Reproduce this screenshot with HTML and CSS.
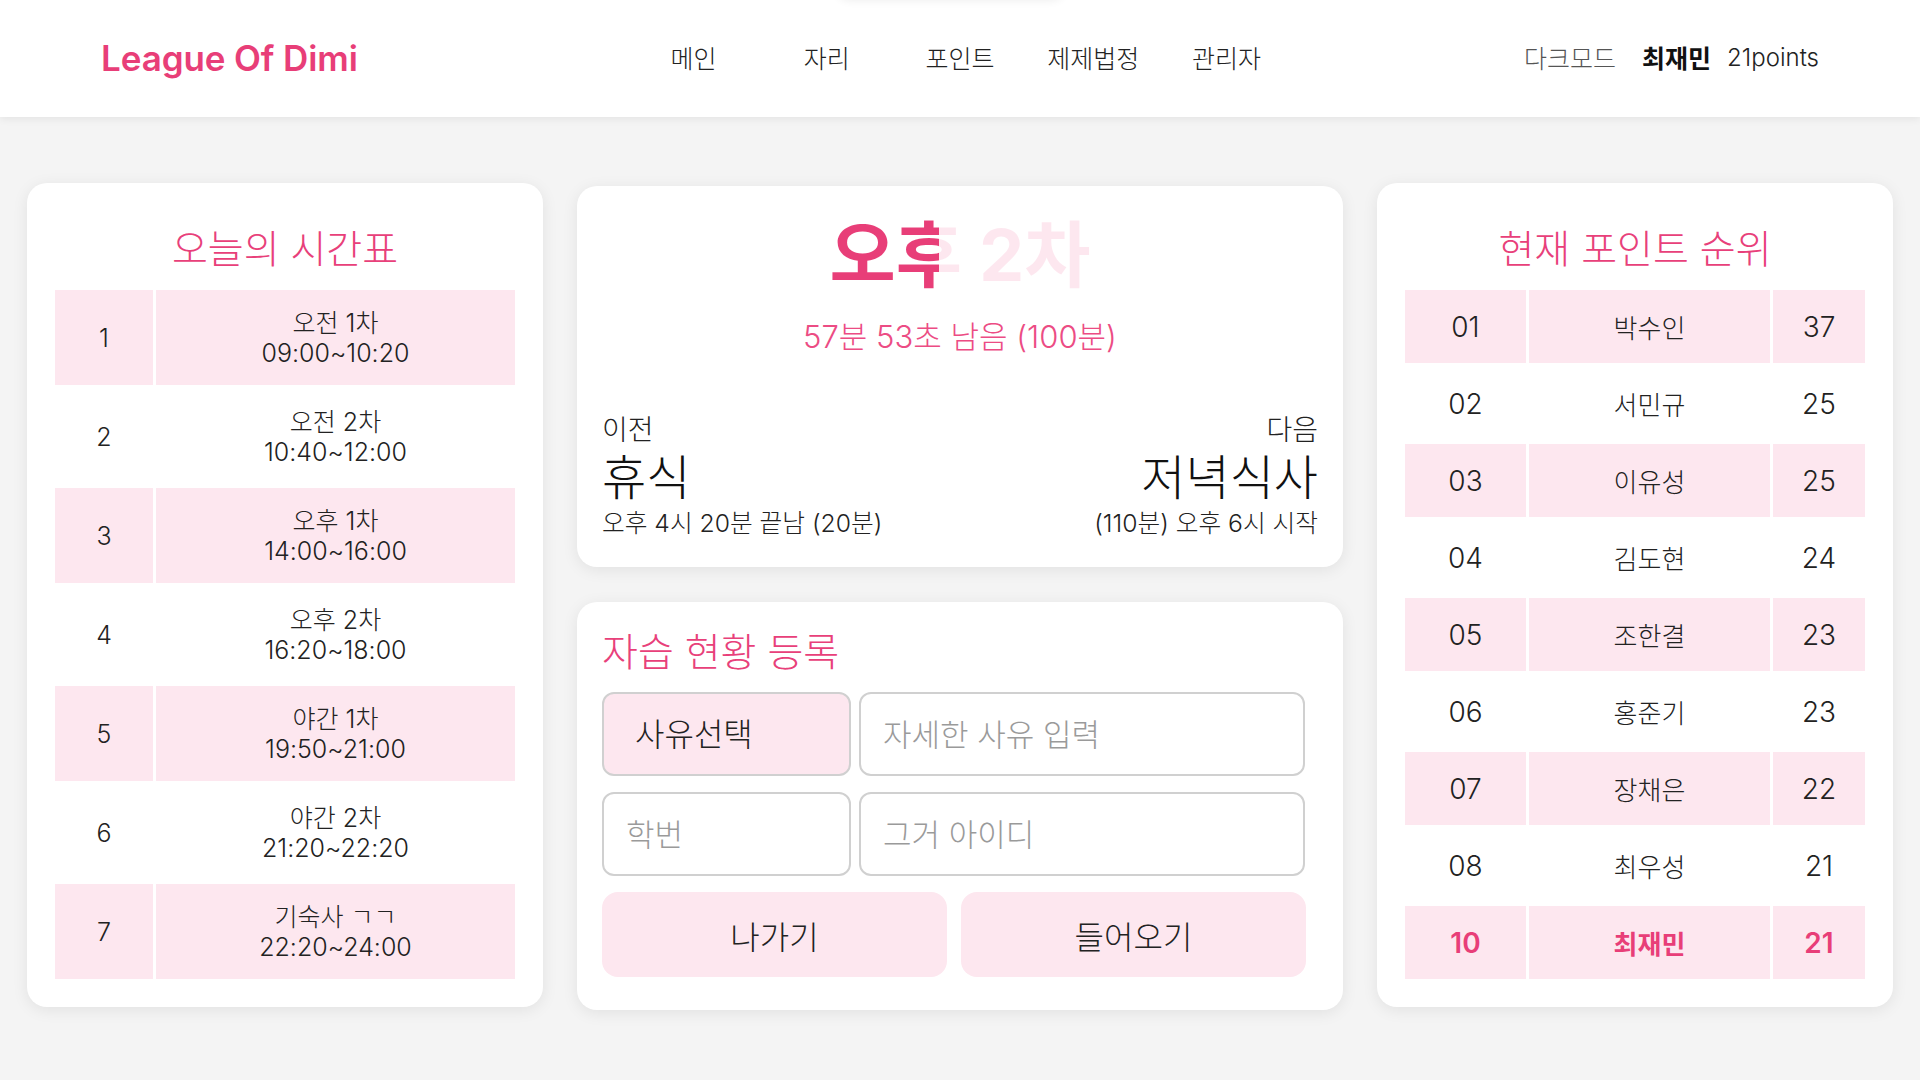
FILE: index.html
```html
<!DOCTYPE html>
<html lang="ko">
<head>
<meta charset="utf-8">
<title>League Of Dimi</title>
<link rel="stylesheet" href="styles.css">
</head>
<body>
<div class="toast-ghost"></div>
<header class="header">
  <div class="logo">League Of Dimi</div>
  <nav class="nav">
    <a class="nav-item">메인</a>
    <a class="nav-item">자리</a>
    <a class="nav-item">포인트</a>
    <a class="nav-item">제제법정</a>
    <a class="nav-item">관리자</a>
  </nav>
  <div class="user">
    <span class="dark">다크모드</span>
    <span class="name">최재민</span>
    <span class="points">21points</span>
  </div>
</header>

<main class="main">
  <section class="card side-card">
    <h2 class="card-title">오늘의 시간표</h2>
    <div class="timetable">
      <div class="tt-row odd"><div class="cell">1</div><div class="cell">오전 1차<br>09:00~10:20</div></div>
      <div class="tt-row"><div class="cell">2</div><div class="cell">오전 2차<br>10:40~12:00</div></div>
      <div class="tt-row odd"><div class="cell">3</div><div class="cell">오후 1차<br>14:00~16:00</div></div>
      <div class="tt-row"><div class="cell">4</div><div class="cell">오후 2차<br>16:20~18:00</div></div>
      <div class="tt-row odd"><div class="cell">5</div><div class="cell">야간 1차<br>19:50~21:00</div></div>
      <div class="tt-row"><div class="cell">6</div><div class="cell">야간 2차<br>21:20~22:20</div></div>
      <div class="tt-row odd"><div class="cell">7</div><div class="cell">기숙사 ㄱㄱ<br>22:20~24:00</div></div>
    </div>
  </section>

  <div class="center-col">
    <section class="card now-card">
      <div class="now-title-wrap"><h1 class="now-title" style="--progress: 42.1%">오후 2차</h1></div>
      <div class="now-remaining">57분 53초 남음 (100분)</div>
      <div class="prev-next">
        <div class="pn prev">
          <div class="pn-label">이전</div>
          <div class="pn-name">휴식</div>
          <div class="pn-info">오후 4시 20분 끝남 (20분)</div>
        </div>
        <div class="pn next">
          <div class="pn-label">다음</div>
          <div class="pn-name">저녁식사</div>
          <div class="pn-info">(110분) 오후 6시 시작</div>
        </div>
      </div>
    </section>

    <section class="card form-card">
      <h2 class="form-title">자습 현황 등록</h2>
      <div class="form-grid">
        <select class="field select"><option>사유선택</option></select>
        <input class="field" type="text" placeholder="자세한 사유 입력">
        <input class="field" type="text" placeholder="학번">
        <input class="field" type="text" placeholder="그거 아이디">
      </div>
      <div class="btn-row">
        <button class="btn">나가기</button>
        <button class="btn">들어오기</button>
      </div>
    </section>
  </div>

  <section class="card side-card">
    <h2 class="card-title">현재 포인트 순위</h2>
    <div class="ranking">
      <div class="rk-row odd"><div class="cell">01</div><div class="cell nm">박수인</div><div class="cell">37</div></div>
      <div class="rk-row"><div class="cell">02</div><div class="cell nm">서민규</div><div class="cell">25</div></div>
      <div class="rk-row odd"><div class="cell">03</div><div class="cell nm">이유성</div><div class="cell">25</div></div>
      <div class="rk-row"><div class="cell">04</div><div class="cell nm">김도현</div><div class="cell">24</div></div>
      <div class="rk-row odd"><div class="cell">05</div><div class="cell nm">조한결</div><div class="cell">23</div></div>
      <div class="rk-row"><div class="cell">06</div><div class="cell nm">홍준기</div><div class="cell">23</div></div>
      <div class="rk-row odd"><div class="cell">07</div><div class="cell nm">장채은</div><div class="cell">22</div></div>
      <div class="rk-row"><div class="cell">08</div><div class="cell nm">최우성</div><div class="cell">21</div></div>
      <div class="rk-row odd me"><div class="cell">10</div><div class="cell nm">최재민</div><div class="cell">21</div></div>
    </div>
  </section>
</main>
</body>
</html>
```

FILE: styles.css
```css
* { box-sizing: border-box; }

html, body {
  margin: 0;
  padding: 0;
}

body {
  background: #f4f4f4;
  font-family: Inter, "Noto Sans CJK KR", sans-serif;
  font-weight: 300;
  color: #222;
  min-height: 1080px;
  position: relative;
  overflow: hidden;
}

.toast-ghost {
  position: absolute;
  top: -50px;
  left: 838px;
  width: 225px;
  height: 50px;
  border-radius: 10px;
  background: #fff;
  box-shadow: 0 0 10px rgba(0, 0, 0, 0.08);
  z-index: 5;
}

.header {
  height: 117px;
  background: #fff;
  box-shadow: 0 2px 8px rgba(0, 0, 0, 0.07);
  display: grid;
  grid-template-columns: 1fr auto 1fr;
  align-items: center;
  padding: 0 101px 3px;
  position: relative;
  z-index: 2;
}

.logo {
  color: #e83e78;
  font-size: 35px;
  font-weight: 600;
  letter-spacing: -0.1px;
  padding-top: 2px;
}

.nav {
  display: flex;
}

.nav-item {
  width: 133.3px;
  text-align: center;
  font-size: 25px;
  color: #222;
}

.user {
  justify-self: end;
  display: flex;
  align-items: center;
  font-size: 25px;
}

.user .dark { color: #555; margin-right: 26px; }
.user .name { font-weight: 700; color: #111; margin-right: 16px; }
.user .points { color: #222; font-size: 24px; }

.main {
  display: grid;
  grid-template-columns: 516px 1fr 516px;
  gap: 34px;
  padding: 66px 27px 0;
  align-items: start;
}

.card {
  background: #fff;
  border-radius: 20px;
  box-shadow: 0 3px 16px rgba(0, 0, 0, 0.08);
}

.side-card {
  padding: 28px;
}

.card-title {
  margin: 0;
  height: 79px;
  padding-bottom: 9px;
  display: flex;
  align-items: center;
  justify-content: center;
  font-size: 39px;
  font-weight: 300;
  color: #e8407a;
}

.timetable, .ranking {
  display: flex;
  flex-direction: column;
  gap: 4px;
}

.tt-row {
  display: grid;
  grid-template-columns: 98px 1fr;
  gap: 3px;
  height: 95px;
}

.rk-row {
  display: grid;
  grid-template-columns: 121px 1fr 92px;
  gap: 3px;
  height: 73px;
}

.cell {
  display: flex;
  align-items: center;
  justify-content: center;
  text-align: center;
}

.tt-row .cell {
  font-size: 25px;
  line-height: 30px;
}

.rk-row .cell {
  font-size: 28px;
}

.rk-row .cell.nm {
  font-size: 26px;
}

.odd .cell { background: #fde7ef; }

.me .cell {
  color: #e83e78;
  font-weight: 600;
}

.center-col {
  display: flex;
  flex-direction: column;
  gap: 35px;
  margin-top: 3px;
}

.now-card {
  padding: 26px 25px 29px;
}

.now-title-wrap {
  text-align: center;
}

.now-title {
  display: inline-block;
  margin: 0;
  font-size: 72px;
  line-height: 86px;
  font-weight: 700;
  background: linear-gradient(90deg, #e83e78 var(--progress), #fde7ef var(--progress));
  -webkit-background-clip: text;
  background-clip: text;
  color: transparent;
}

.now-remaining {
  margin-top: 20px;
  text-align: center;
  font-size: 31px;
  line-height: 38px;
  color: #ec4c84;
}

.prev-next {
  margin-top: 57px;
  display: flex;
  justify-content: space-between;
}

.next { text-align: right; }

.pn-label {
  font-size: 28px;
  line-height: 34px;
  color: #222;
}

.pn-name {
  margin-top: 4px;
  font-size: 48px;
  line-height: 53px;
  color: #111;
}

.pn-info {
  margin-top: 5px;
  font-size: 24.7px;
  line-height: 29px;
  color: #222;
}

.form-card {
  padding: 26px 25px 33px;
}

.form-title {
  margin: 0 0 17px;
  font-size: 39px;
  line-height: 47px;
  font-weight: 300;
  color: #e8407a;
}

.form-grid {
  width: 703px;
  display: grid;
  grid-template-columns: 249px minmax(0, 1fr);
  column-gap: 8px;
  row-gap: 16px;
}

.field {
  width: 100%;
  min-width: 0;
  height: 84px;
  border: 2px solid #d0d0d0;
  border-radius: 12px;
  background: #fff;
  font-family: inherit;
  font-weight: 300;
  font-size: 31px;
  color: #222;
  padding: 0 22px;
  outline: none;
}

.field::placeholder { color: #9a9a9a; }

.select {
  -webkit-appearance: none;
  appearance: none;
  background: #fde7ef;
  padding-left: 31px;
  font-size: 32px;
}

.btn-row {
  width: 704px;
  margin-top: 16px;
  display: grid;
  grid-template-columns: 1fr 1fr;
  gap: 14px;
}

.btn {
  height: 85px;
  border: none;
  border-radius: 16px;
  background: #fde7ef;
  font-family: inherit;
  font-weight: 300;
  font-size: 32px;
  color: #222;
}
```
